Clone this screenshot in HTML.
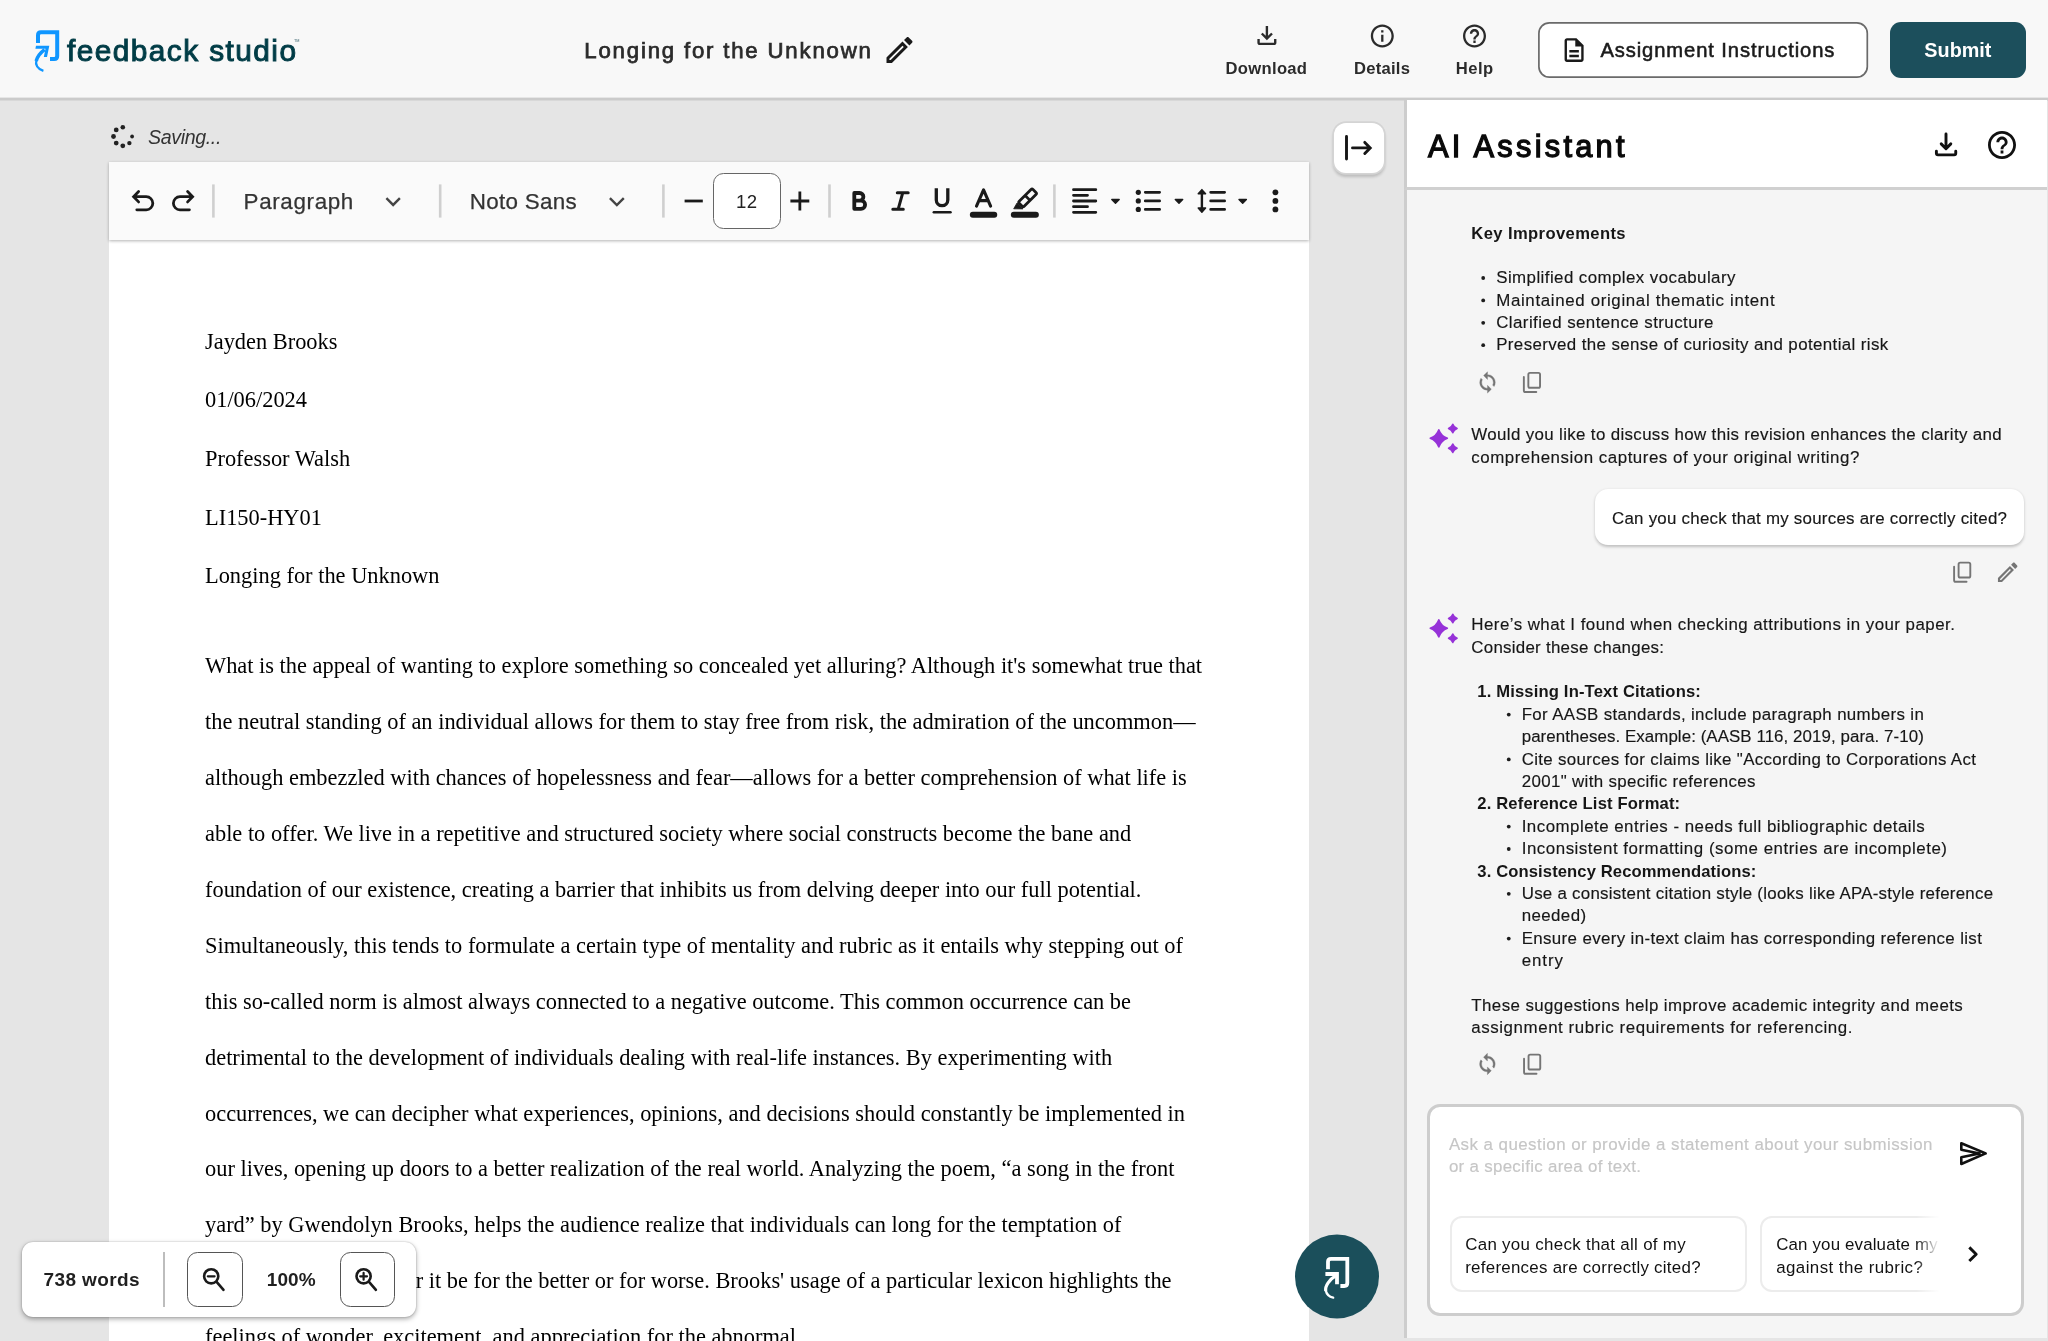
<!DOCTYPE html>
<html lang="en">
<head>
<meta charset="utf-8">
<title>Feedback Studio - Longing for the Unknown</title>
<style>
html,body{margin:0;padding:0}
body{width:2048px;height:1341px;overflow:hidden;position:relative;background:#e5e5e5;font-family:"Liberation Sans",sans-serif;color:#1c1c1c}
header,main,aside{display:block;position:absolute;left:0;top:0;width:2048px;height:1341px;will-change:transform}
header{height:101px}
div,article{box-sizing:border-box}
.t{position:absolute;white-space:nowrap;margin:0;padding:0;font-weight:400;display:block}
.ss{font-family:"Liberation Sans",sans-serif}
.sf{font-family:"Liberation Serif",serif}
svg{position:absolute;left:0;top:0;overflow:visible;pointer-events:none}
.hbar{position:absolute;left:0;top:0;width:2048px;height:98px;background:#f8f8f8}
.btn-assign{position:absolute;left:1538px;top:22px;width:330px;height:56px;background:#fff;border-radius:11px}
.btn-submit{position:absolute;left:1890px;top:22px;width:136px;height:56px;background:#1c4f5c;border-radius:11px}
.page{position:absolute;left:109px;top:200px;width:1200px;height:1141px;background:#fff}
.page .t{margin-left:-109px;margin-top:-200px}
.toolbar{position:absolute;left:109px;top:162px;width:1200px;height:78px;background:#fafafa;box-shadow:0 1px 3px rgba(0,0,0,.3)}
.sizebox{position:absolute;left:712.8px;top:173.3px;width:67.8px;height:55.5px;background:#fff;border:1.5px solid #666;border-radius:10.5px}
.ai-head{position:absolute;left:1404px;top:100px;width:643px;height:90px;background:#fff;border-left:3px solid #cdcdcd;border-bottom:3px solid #d0d0d0}
.ai-body{position:absolute;left:1404px;top:190px;width:643px;height:1148px;background:#f5f5f5;border-left:3px solid #cdcdcd}
.bubble{position:absolute;left:1595.4px;top:489.4px;width:428.3px;height:55.2px;background:#fff;border-radius:13px;box-shadow:0 1.5px 3px rgba(0,0,0,.22)}
.ask{position:absolute;left:1427px;top:1104px;width:597px;height:212px;background:#fff;border:3px solid #cdcdcd;border-radius:13px}
.chips{position:absolute;left:0;top:0;width:512px;height:206px;overflow:hidden}
.chip{position:absolute;top:109px;height:76px;width:297px;border:2px solid #ececec;border-radius:12px;background:#fff}
.chip.c1{left:20px}
.chip.c2{left:330px}
.chip .t{margin-top:-1218px}
.chip.c1 .t{margin-left:-1452px}
.chip.c2 .t{margin-left:-1762px}
.fade{position:absolute;left:486px;top:100px;width:26px;height:100px;background:linear-gradient(90deg,rgba(255,255,255,0),#fff 90%)}
.collapse{position:absolute;left:1334px;top:123px;width:50px;height:50px;background:#fff;border-radius:12px;box-shadow:0 0 0 1.8px #d4d4d4,0 3px 3px 1px rgba(0,0,0,.18)}
.status{position:absolute;left:21.9px;top:1241.8px;width:394.6px;height:75.5px;background:#fff;border-radius:11px;box-shadow:0 2px 5px rgba(0,0,0,.34),0 0 1.5px rgba(0,0,0,.3)}
.divider{position:absolute;left:141.6px;top:9.9px;width:1.6px;height:55.3px;background:#bdbdbd}
.zb{position:absolute;top:9.9px;width:55.4px;height:55.4px;background:#fff;border:1.5px solid #555;border-radius:10.5px}
.z1{left:165.5px}.z2{left:317.9px}
</style>
</head>
<body>
<main id="editor">
<article class="page">
<p class="t sf" style="left:205.00px;top:327px;height:29px;line-height:29px;font-size:22.4px;color:#000;">Jayden Brooks</p>
<p class="t sf" style="left:205.00px;top:385px;height:29px;line-height:29px;font-size:22.4px;color:#000;">01/06/2024</p>
<p class="t sf" style="left:205.00px;top:444px;height:29px;line-height:29px;font-size:22.4px;color:#000;">Professor Walsh</p>
<p class="t sf" style="left:205.00px;top:503px;height:29px;line-height:29px;font-size:22.4px;color:#000;">LI150-HY01</p>
<p class="t sf" style="left:205.00px;top:561px;height:29px;line-height:29px;font-size:22.4px;color:#000;">Longing for the Unknown</p>
<p class="t sf" style="left:205.00px;top:651px;height:29px;line-height:29px;font-size:22.4px;color:#000;">What is the appeal of wanting to explore something so concealed yet alluring? Although it's somewhat true that</p>
<p class="t sf" style="left:205.00px;top:707px;height:29px;line-height:29px;font-size:22.4px;color:#000;">the neutral standing of an individual allows for them to stay free from risk, the admiration of the uncommon&mdash;</p>
<p class="t sf" style="left:205.00px;top:763px;height:29px;line-height:29px;font-size:22.4px;color:#000;">although embezzled with chances of hopelessness and fear&mdash;allows for a better comprehension of what life is</p>
<p class="t sf" style="left:205.00px;top:819px;height:29px;line-height:29px;font-size:22.4px;color:#000;">able to offer. We live in a repetitive and structured society where social constructs become the bane and</p>
<p class="t sf" style="left:205.00px;top:875px;height:29px;line-height:29px;font-size:22.4px;color:#000;">foundation of our existence, creating a barrier that inhibits us from delving deeper into our full potential.</p>
<p class="t sf" style="left:205.00px;top:931px;height:29px;line-height:29px;font-size:22.4px;color:#000;">Simultaneously, this tends to formulate a certain type of mentality and rubric as it entails why stepping out of</p>
<p class="t sf" style="left:205.00px;top:987px;height:29px;line-height:29px;font-size:22.4px;color:#000;">this so-called norm is almost always connected to a negative outcome. This common occurrence can be</p>
<p class="t sf" style="left:205.00px;top:1043px;height:29px;line-height:29px;font-size:22.4px;color:#000;">detrimental to the development of individuals dealing with real-life instances. By experimenting with</p>
<p class="t sf" style="left:205.00px;top:1099px;height:29px;line-height:29px;font-size:22.4px;color:#000;">occurrences, we can decipher what experiences, opinions, and decisions should constantly be implemented in</p>
<p class="t sf" style="left:205.00px;top:1154px;height:29px;line-height:29px;font-size:22.4px;color:#000;">our lives, opening up doors to a better realization of the real world. Analyzing the poem, &ldquo;a song in the front</p>
<p class="t sf" style="left:205.00px;top:1210px;height:29px;line-height:29px;font-size:22.4px;color:#000;">yard&rdquo; by Gwendolyn Brooks, helps the audience realize that individuals can long for the temptation of</p>
<p class="t sf" style="left:205.00px;top:1266px;height:29px;line-height:29px;font-size:22.4px;color:#000;">the unexpected, whether it be for the better or for worse. Brooks' usage of a particular lexicon highlights the</p>
<p class="t sf" style="left:205.00px;top:1322px;height:29px;line-height:29px;font-size:22.4px;color:#000;">feelings of wonder, excitement, and appreciation for the abnormal.</p>
</article>
<div class="toolbar"></div>
<div class="sizebox"></div>
<svg width="2048" height="1341" viewBox="0 0 2048 1341" aria-hidden="true"><rect x="212.10" y="184.4" width="2.6" height="33.2" fill="#cfcfcf"/><rect x="438.90" y="184.4" width="2.6" height="33.2" fill="#cfcfcf"/><rect x="662.10" y="184.4" width="2.6" height="33.2" fill="#cfcfcf"/><rect x="828.20" y="184.4" width="2.6" height="33.2" fill="#cfcfcf"/><rect x="1053.10" y="184.4" width="2.6" height="33.2" fill="#cfcfcf"/><g fill="#222"><circle cx="122.80" cy="127.20" r="2.3"/><circle cx="132.10" cy="136.50" r="1.9"/><circle cx="129.38" cy="143.08" r="2.2"/><circle cx="122.80" cy="145.80" r="2.4"/><circle cx="116.22" cy="143.08" r="2.4"/><circle cx="113.50" cy="136.50" r="2.4"/><circle cx="116.22" cy="129.92" r="2.4"/></g>
<g fill="none" stroke="#1a1a1a" stroke-width="2.8" stroke-linejoin="miter" stroke-linecap="round">
<path d="M138.6,191.6 L133.6,196.7 L138.6,201.9 M134,196.7 H146.25 A6.55,6.55 0 0 1 146.25,209.8 H136.8"/>
<path transform="translate(326.2 0) scale(-1 1)" d="M138.6,191.6 L133.6,196.7 L138.6,201.9 M134,196.7 H146.25 A6.55,6.55 0 0 1 146.25,209.8 H136.8"/>
</g>
<g fill="none" stroke="#444" stroke-width="2.4">
<path d="M386.4,198.2 L393.15,204.95 L399.9,198.2"/>
<path d="M609.9,198.2 L616.85,205.15 L623.8,198.2"/>
</g>
<g fill="none" stroke="#1a1a1a" stroke-width="2.8">
<path d="M684.6,201 H702.8"/>
<path d="M790.4,201 H809.3 M799.85,191.4 V210.6"/>
</g>
<g fill="none" stroke="#1a1a1a" stroke-width="3.8" stroke-linejoin="round" stroke-linecap="round">
<path d="M854.3,193 V208.8 M854.3,193 H859.6 A3.8,3.8 0 0 1 859.6,200.6 H854.3 M854.3,200.6 H861 A4.1,4.1 0 0 1 861,208.8 H854.3"/>
</g>
<g fill="none" stroke="#1a1a1a" stroke-width="3" stroke-linecap="round">
<path d="M897.3,192.7 H908.2 M892.8,209.2 H903.3 M902.8,192.7 L898.2,209.2"/>
</g>
<g fill="none" stroke="#1a1a1a" stroke-width="3.3">
<path d="M936.3,188.3 V199.9 A5.75,5.75 0 0 0 947.8,199.9 V188.3"/>
<path stroke-width="2.5" stroke-linecap="round" d="M933.8,212.3 H950.5"/>
<path stroke-width="3.1" stroke-linecap="round" stroke-linejoin="round" d="M976.5,206.2 L983.55,189.8 L990.6,206.2 M979.2,200.6 H987.9"/>
<path stroke-width="5.9" stroke-linecap="round" d="M972.8,214.8 H994.3"/>
<path stroke-width="5.9" stroke-linecap="round" d="M1013.8,214.8 H1035.9"/>
</g>
<g transform="translate(1027.6 197.9) rotate(-45)" fill="none" stroke="#1a1a1a" stroke-width="2.8" stroke-linejoin="round">
<rect x="-9.75" y="-3.5" width="19.5" height="7" rx="1.4"/>
<path d="M0,-3.5 V3.5"/>
</g>
<path fill="#1a1a1a" stroke="#1a1a1a" stroke-width="0.8" stroke-linejoin="round" d="M1013.7,208.8 L1017,203 L1023,208.9 Z"/>
<g fill="none" stroke="#1a1a1a" stroke-width="2.8" stroke-linecap="round">
<path d="M1073.5,189.7 H1095.8 M1073.5,195.35 H1087.5 M1073.5,201 H1095.8 M1073.5,206.65 H1087.5 M1073.5,212.3 H1095.8"/>
<path d="M1145.3,192.3 H1159.6 M1145.3,200.9 H1159.6 M1145.3,209.4 H1159.6"/>
<path d="M1210.7,192.3 H1224.6 M1210.7,200.9 H1224.6 M1210.7,209.4 H1224.6"/>
<path stroke-width="2.4" stroke-linecap="butt" d="M1201.9,192 V210"/>
</g>
<g fill="#1a1a1a" stroke="#1a1a1a" stroke-width="1.4" stroke-linejoin="round">
<path d="M1111.80,199.5 H1119.20 L1115.50,203.3 Z"/><path d="M1175.30,199.5 H1182.70 L1179.00,203.3 Z"/><path d="M1239.00,199.5 H1246.40 L1242.70,203.3 Z"/>
<path d="M1201.9,189.6 L1205.6,193.8 H1198.2 Z M1201.9,212.2 L1205.6,208 H1198.2 Z"/>
</g>
<g fill="#1a1a1a">
<circle cx="1138.3" cy="192.3" r="2.6"/><circle cx="1138.3" cy="200.9" r="2.6"/><circle cx="1138.3" cy="209.4" r="2.6"/>
<circle cx="1275.4" cy="192.3" r="2.9"/><circle cx="1275.4" cy="200.9" r="2.9"/><circle cx="1275.4" cy="209.4" r="2.9"/>
</g>
</svg>
<div class="t ss" style="left:148.00px;top:124px;height:26px;line-height:26px;font-size:19.6px;letter-spacing:-0.365px;color:#333333;font-style:italic;">Saving...</div>
<div class="t ss" style="left:243.60px;top:187px;height:29px;line-height:29px;font-size:22.4px;letter-spacing:0.646px;color:#333333;-webkit-text-stroke:0.25px currentColor;">Paragraph</div>
<div class="t ss" style="left:469.80px;top:187px;height:29px;line-height:29px;font-size:22.4px;letter-spacing:0.303px;color:#333333;-webkit-text-stroke:0.25px currentColor;">Noto Sans</div>
<div class="t ss" style="left:736.08px;top:189px;height:25px;line-height:25px;font-size:18.6px;letter-spacing:0.359px;color:#222222;">12</div>
</main>
<header id="top">
<div class="hbar"></div>
<div class="btn-assign" role="button" aria-label="Assignment Instructions"></div>
<div class="btn-submit" role="button" aria-label="Submit"></div>
<svg width="2048" height="1341" viewBox="0 0 2048 1341" aria-hidden="true"><rect x="0" y="97.6" width="2048" height="2.9" fill="#cbcbcb"/><rect x="1538.9" y="22.9" width="328.4" height="54.3" rx="10.5" fill="none" stroke="#6a6a6a" stroke-width="1.7"/><g fill="none" stroke="#0f96ff"><path stroke-width="4" d="M38,43.1 V35.3 Q38,32.3 41,32.3 H57.2 V55.9 Q57.2,58.9 54.2,58.9 H50"/><path fill="#0f96ff" stroke="none" d="M36,45.7 H49.3 L47,57 H43.8 L45.5,48.7 H35.4 Z"/><path stroke-width="3.6" d="M44.6,49.6 C41,52.2 37.4,56.6 36.2,61"/><path stroke-width="2.3" stroke-linecap="butt" d="M36.4,60 C35.2,64.5 37.3,68.9 43.4,70.8"/></g><path transform="translate(882.17 32.67) scale(1.4440)" fill="#1a1a1a" d="M14.06 9.02l.92.92L5.92 19H5v-.92l9.06-9.06M17.66 3c-.25 0-.51.1-.7.29l-1.83 1.83 3.75 3.75 1.83-1.83c.39-.39.39-1.02 0-1.41l-2.34-2.34c-.2-.2-.45-.29-.71-.29zm-3.6 3.19L3 17.25V21h3.75L17.81 9.94l-3.75-3.75z"/><path transform="translate(1252.62 21.27) scale(1.1900)" fill="#2b2b2b" d="M18 15v3H6v-3H4v3c0 1.1.9 2 2 2h12c1.1 0 2-.9 2-2v-3h-2zm-1-4l-1.41-1.41L13 12.17V4h-2v8.17L8.41 9.59 7 11l5 5 5-5z"/><path transform="translate(1368.50 22.20) scale(1.1500)" fill="#2b2b2b" d="M11 7h2v2h-2zm0 4h2v6h-2zm1-9C6.48 2 2 6.48 2 12s4.48 10 10 10 10-4.48 10-10S17.52 2 12 2zm0 18c-4.41 0-8-3.59-8-8s3.59-8 8-8 8 3.59 8 8-3.59 8-8 8z"/><path transform="translate(1460.70 22.20) scale(1.1500)" fill="#2b2b2b" d="M11 18h2v-2h-2v2zm1-16C6.48 2 2 6.48 2 12s4.48 10 10 10 10-4.48 10-10S17.52 2 12 2zm0 18c-4.41 0-8-3.59-8-8s3.59-8 8-8 8 3.59 8 8-3.59 8-8 8zm0-14c-2.21 0-4 1.79-4 4h2c0-1.1.9-2 2-2s2 .9 2 2c0 2-3 1.75-3 5h2c0-2.25 3-2.5 3-5 0-2.21-1.79-4-4-4z"/><path transform="translate(1559.82 35.77) scale(1.1900)" fill="#1a1a1a" d="M8 16h8v2H8zm0-4h8v2H8zm6-10H6c-1.1 0-2 .9-2 2v16c0 1.1.89 2 1.99 2H18c1.1 0 2-.9 2-2V8l-6-6zm4 18H6V4h7v5h5v11z"/></svg>
<div class="t ss logo" style="left:67.00px;top:32px;height:37px;line-height:37px;font-size:29.8px;letter-spacing:1.448px;color:#003c46;-webkit-text-stroke:1.0px currentColor;">feedback studio</div>
<div class="t ss" style="left:294.00px;top:37px;height:8px;line-height:8px;font-size:3.8px;color:#35606a;">TM</div>
<h1 class="t ss" style="left:584.30px;top:36px;height:29px;line-height:29px;font-size:22.2px;letter-spacing:1.813px;color:#2b2b2b;-webkit-text-stroke:0.75px currentColor;">Longing for the Unknown</h1>
<div class="t ss" style="left:1225.57px;top:57px;height:23px;line-height:23px;font-size:16.6px;letter-spacing:0.310px;color:#2b2b2b;font-weight:700;">Download</div>
<div class="t ss" style="left:1354.06px;top:57px;height:23px;line-height:23px;font-size:16.6px;letter-spacing:0.242px;color:#2b2b2b;font-weight:700;">Details</div>
<div class="t ss" style="left:1455.83px;top:57px;height:23px;line-height:23px;font-size:16.6px;letter-spacing:0.458px;color:#2b2b2b;font-weight:700;">Help</div>
<div class="t ss" style="left:1600.40px;top:37px;height:26px;line-height:26px;font-size:20.2px;letter-spacing:0.898px;color:#1a1a1a;-webkit-text-stroke:0.55px currentColor;">Assignment Instructions</div>
<div class="t ss" style="left:1924.32px;top:37px;height:26px;line-height:26px;font-size:19.8px;letter-spacing:0.022px;color:#ffffff;font-weight:700;">Submit</div>
</header>
<aside id="ai">
<div class="ai-head"></div>
<div class="ai-body"></div>
<div class="bubble"></div>
<div class="ask">
<div class="chips"><div class="chip c1"><div class="t ss" style="left:1465.20px;top:1233px;height:23px;line-height:23px;font-size:16.9px;letter-spacing:0.308px;color:#111111;">Can you check that all of my</div>
<div class="t ss" style="left:1465.20px;top:1256px;height:23px;line-height:23px;font-size:16.9px;letter-spacing:0.272px;color:#111111;">references are correctly cited?</div></div><div class="chip c2"><div class="t ss" style="left:1776.20px;top:1233px;height:23px;line-height:23px;font-size:16.9px;letter-spacing:0.154px;color:#111111;">Can you evaluate my essay</div>
<div class="t ss" style="left:1776.20px;top:1256px;height:23px;line-height:23px;font-size:16.9px;letter-spacing:0.427px;color:#111111;">against the rubric?</div></div><div class="fade"></div></div>
</div>
<h2 class="t ss" style="left:1427.90px;top:127px;height:39px;line-height:39px;font-size:30.8px;letter-spacing:3.245px;color:#0a0a0a;-webkit-text-stroke:1.3px currentColor;">AI Assistant</h2>
<p class="t ss" style="left:1471.30px;top:222px;height:23px;line-height:23px;font-size:16.599999999999998px;letter-spacing:0.385px;color:#161616;font-weight:700;">Key Improvements</p>
<p class="t ss" style="left:1496.20px;top:266px;height:23px;line-height:23px;font-size:16.9px;letter-spacing:0.430px;color:#161616;-webkit-text-stroke:0.15px currentColor;">Simplified complex vocabulary</p>
<p class="t ss" style="left:1496.20px;top:289px;height:23px;line-height:23px;font-size:16.9px;letter-spacing:0.649px;color:#161616;-webkit-text-stroke:0.15px currentColor;">Maintained original thematic intent</p>
<p class="t ss" style="left:1496.20px;top:311px;height:23px;line-height:23px;font-size:16.9px;letter-spacing:0.431px;color:#161616;-webkit-text-stroke:0.15px currentColor;">Clarified sentence structure</p>
<p class="t ss" style="left:1496.20px;top:333px;height:23px;line-height:23px;font-size:16.9px;letter-spacing:0.386px;color:#161616;-webkit-text-stroke:0.15px currentColor;">Preserved the sense of curiosity and potential risk</p>
<p class="t ss" style="left:1471.30px;top:423px;height:23px;line-height:23px;font-size:16.9px;letter-spacing:0.354px;color:#161616;-webkit-text-stroke:0.15px currentColor;">Would you like to discuss how this revision enhances the clarity and</p>
<p class="t ss" style="left:1471.30px;top:446px;height:23px;line-height:23px;font-size:16.9px;letter-spacing:0.526px;color:#161616;-webkit-text-stroke:0.15px currentColor;">comprehension captures of your original writing?</p>
<p class="t ss" style="left:1612.00px;top:507px;height:23px;line-height:23px;font-size:16.9px;letter-spacing:0.244px;color:#161616;-webkit-text-stroke:0.15px currentColor;">Can you check that my sources are correctly cited?</p>
<p class="t ss" style="left:1471.30px;top:613px;height:23px;line-height:23px;font-size:16.9px;letter-spacing:0.459px;color:#161616;-webkit-text-stroke:0.15px currentColor;">Here&rsquo;s what I found when checking attributions in your paper.</p>
<p class="t ss" style="left:1471.30px;top:636px;height:23px;line-height:23px;font-size:16.9px;letter-spacing:0.265px;color:#161616;-webkit-text-stroke:0.15px currentColor;">Consider these changes:</p>
<div class="t ss" style="left:1477.18px;top:680px;height:23px;line-height:23px;font-size:16.599999999999998px;letter-spacing:0.375px;color:#161616;font-weight:700;">1.</div>
<p class="t ss" style="left:1496.20px;top:680px;height:23px;line-height:23px;font-size:16.599999999999998px;letter-spacing:0.161px;color:#161616;font-weight:700;">Missing In-Text Citations:</p>
<p class="t ss" style="left:1521.70px;top:703px;height:23px;line-height:23px;font-size:16.9px;letter-spacing:0.345px;color:#161616;-webkit-text-stroke:0.15px currentColor;">For AASB standards, include paragraph numbers in</p>
<p class="t ss" style="left:1521.70px;top:725px;height:23px;line-height:23px;font-size:16.9px;letter-spacing:0.069px;color:#161616;-webkit-text-stroke:0.15px currentColor;">parentheses. Example: (AASB 116, 2019, para. 7-10)</p>
<p class="t ss" style="left:1521.70px;top:748px;height:23px;line-height:23px;font-size:16.9px;letter-spacing:0.331px;color:#161616;-webkit-text-stroke:0.15px currentColor;">Cite sources for claims like &quot;According to Corporations Act</p>
<p class="t ss" style="left:1521.70px;top:770px;height:23px;line-height:23px;font-size:16.9px;letter-spacing:0.342px;color:#161616;-webkit-text-stroke:0.15px currentColor;">2001&quot; with specific references</p>
<div class="t ss" style="left:1477.18px;top:792px;height:23px;line-height:23px;font-size:16.599999999999998px;letter-spacing:0.375px;color:#161616;font-weight:700;">2.</div>
<p class="t ss" style="left:1496.20px;top:792px;height:23px;line-height:23px;font-size:16.599999999999998px;letter-spacing:0.153px;color:#161616;font-weight:700;">Reference List Format:</p>
<p class="t ss" style="left:1521.70px;top:815px;height:23px;line-height:23px;font-size:16.9px;letter-spacing:0.475px;color:#161616;-webkit-text-stroke:0.15px currentColor;">Incomplete entries - needs full bibliographic details</p>
<p class="t ss" style="left:1521.70px;top:837px;height:23px;line-height:23px;font-size:16.9px;letter-spacing:0.524px;color:#161616;-webkit-text-stroke:0.15px currentColor;">Inconsistent formatting (some entries are incomplete)</p>
<div class="t ss" style="left:1477.18px;top:860px;height:23px;line-height:23px;font-size:16.599999999999998px;letter-spacing:0.375px;color:#161616;font-weight:700;">3.</div>
<p class="t ss" style="left:1496.20px;top:860px;height:23px;line-height:23px;font-size:16.599999999999998px;letter-spacing:0.106px;color:#161616;font-weight:700;">Consistency Recommendations:</p>
<p class="t ss" style="left:1521.70px;top:882px;height:23px;line-height:23px;font-size:16.9px;letter-spacing:0.265px;color:#161616;-webkit-text-stroke:0.15px currentColor;">Use a consistent citation style (looks like APA-style reference</p>
<p class="t ss" style="left:1521.70px;top:904px;height:23px;line-height:23px;font-size:16.9px;letter-spacing:0.398px;color:#161616;-webkit-text-stroke:0.15px currentColor;">needed)</p>
<p class="t ss" style="left:1521.70px;top:927px;height:23px;line-height:23px;font-size:16.9px;letter-spacing:0.359px;color:#161616;-webkit-text-stroke:0.15px currentColor;">Ensure every in-text claim has corresponding reference list</p>
<p class="t ss" style="left:1521.70px;top:949px;height:23px;line-height:23px;font-size:16.9px;letter-spacing:0.949px;color:#161616;-webkit-text-stroke:0.15px currentColor;">entry</p>
<p class="t ss" style="left:1471.30px;top:994px;height:23px;line-height:23px;font-size:16.9px;letter-spacing:0.412px;color:#161616;-webkit-text-stroke:0.15px currentColor;">These suggestions help improve academic integrity and meets</p>
<p class="t ss" style="left:1471.30px;top:1016px;height:23px;line-height:23px;font-size:16.9px;letter-spacing:0.569px;color:#161616;-webkit-text-stroke:0.15px currentColor;">assignment rubric requirements for referencing.</p>
<p class="t ss" style="left:1448.90px;top:1133px;height:23px;line-height:23px;font-size:16.9px;letter-spacing:0.454px;color:#c6c6c6;-webkit-text-stroke:0.15px currentColor;">Ask a question or provide a statement about your submission</p>
<p class="t ss" style="left:1448.90px;top:1155px;height:23px;line-height:23px;font-size:16.9px;letter-spacing:0.305px;color:#c6c6c6;-webkit-text-stroke:0.15px currentColor;">or a specific area of text.</p>
<svg width="2048" height="1341" viewBox="0 0 2048 1341" aria-hidden="true">
<g fill="none" stroke="#111" stroke-width="2.9" stroke-linecap="round" stroke-linejoin="round">
<path d="M1946,133.9 V148.4 M1941.2,143.9 L1946,148.7 L1950.8,143.9 M1936.4,151.2 V153.3 Q1936.4,154.85 1938,154.85 H1954.2 Q1955.75,154.85 1955.75,153.3 V151.2"/>
</g><path transform="translate(1985.20 128.20) scale(1.4000)" fill="#111" d="M11 18h2v-2h-2v2zm1-16C6.48 2 2 6.48 2 12s4.48 10 10 10 10-4.48 10-10S17.52 2 12 2zm0 18c-4.41 0-8-3.59-8-8s3.59-8 8-8 8 3.59 8 8-3.59 8-8 8zm0-14c-2.21 0-4 1.79-4 4h2c0-1.1.9-2 2-2s2 .9 2 2c0 2-3 1.75-3 5h2c0-2.25 3-2.5 3-5 0-2.21-1.79-4-4-4z"/><g fill="#1c1c1c"><circle cx="1483.20" cy="278.00" r="1.9"/><circle cx="1483.20" cy="300.40" r="1.9"/><circle cx="1483.20" cy="322.80" r="1.9"/><circle cx="1483.20" cy="345.20" r="1.9"/><circle cx="1508.75" cy="714.60" r="1.9"/><circle cx="1508.75" cy="759.40" r="1.9"/><circle cx="1508.75" cy="826.60" r="1.9"/><circle cx="1508.75" cy="849.00" r="1.9"/><circle cx="1508.75" cy="893.80" r="1.9"/><circle cx="1508.75" cy="938.60" r="1.9"/></g><path fill="#9632d8" stroke="#9632d8" stroke-width="1.5" stroke-linejoin="round" d="M1438.80,429.70 Q1441.12,435.98 1447.40,438.30 Q1441.12,440.62 1438.80,446.90 Q1436.48,440.62 1430.20,438.30 Q1436.48,435.98 1438.80,429.70ZM1452.80,424.20 Q1453.96,427.34 1457.10,428.50 Q1453.96,429.66 1452.80,432.80 Q1451.64,429.66 1448.50,428.50 Q1451.64,427.34 1452.80,424.20ZM1452.80,443.90 Q1453.96,447.04 1457.10,448.20 Q1453.96,449.36 1452.80,452.50 Q1451.64,449.36 1448.50,448.20 Q1451.64,447.04 1452.80,443.90Z"/><path fill="#9632d8" stroke="#9632d8" stroke-width="1.5" stroke-linejoin="round" d="M1438.80,619.70 Q1441.12,625.98 1447.40,628.30 Q1441.12,630.62 1438.80,636.90 Q1436.48,630.62 1430.20,628.30 Q1436.48,625.98 1438.80,619.70ZM1452.80,614.20 Q1453.96,617.34 1457.10,618.50 Q1453.96,619.66 1452.80,622.80 Q1451.64,619.66 1448.50,618.50 Q1451.64,617.34 1452.80,614.20ZM1452.80,633.90 Q1453.96,637.04 1457.10,638.20 Q1453.96,639.36 1452.80,642.50 Q1451.64,639.36 1448.50,638.20 Q1451.64,637.04 1452.80,633.90Z"/><path transform="translate(1475.86 370.76) scale(0.9700)" fill="#757575" stroke="#757575" stroke-width="0.35" stroke-linejoin="round" d="M12 4V1L8 5l4 4V6c3.31 0 6 2.69 6 6 0 1.01-.25 1.97-.7 2.8l1.46 1.46C19.54 15.03 20 13.57 20 12c0-4.42-3.58-8-8-8zm0 14c-3.31 0-6-2.69-6-6 0-1.01.25-1.97.7-2.8L5.240 7.740C4.460 8.970 4 10.430 4 12c0 4.420 3.580 8 8 8v3l4-4-4-4v3z"/><path transform="translate(1475.76 1052.36) scale(0.9700)" fill="#757575" stroke="#757575" stroke-width="0.35" stroke-linejoin="round" d="M12 4V1L8 5l4 4V6c3.31 0 6 2.69 6 6 0 1.01-.25 1.97-.7 2.8l1.46 1.46C19.54 15.03 20 13.57 20 12c0-4.42-3.58-8-8-8zm0 14c-3.31 0-6-2.69-6-6 0-1.01.25-1.97.7-2.8L5.240 7.740C4.460 8.970 4 10.430 4 12c0 4.420 3.580 8 8 8v3l4-4-4-4v3z"/><g transform="translate(0.00 0.00)" fill="none" stroke="#757575" stroke-width="1.9" stroke-linecap="round" stroke-linejoin="round"><rect x="1528.35" y="372.85" width="11.7" height="14.9" rx="1.6"/><path d="M1523.85,376.9 V390.4 Q1523.85,392 1525.45,392 H1536.3"/></g><g transform="translate(0.20 681.80)" fill="none" stroke="#757575" stroke-width="1.9" stroke-linecap="round" stroke-linejoin="round"><rect x="1528.35" y="372.85" width="11.7" height="14.9" rx="1.6"/><path d="M1523.85,376.9 V390.4 Q1523.85,392 1525.45,392 H1536.3"/></g><g transform="translate(430.25 189.80)" fill="none" stroke="#757575" stroke-width="1.9" stroke-linecap="round" stroke-linejoin="round"><rect x="1528.35" y="372.85" width="11.7" height="14.9" rx="1.6"/><path d="M1523.85,376.9 V390.4 Q1523.85,392 1525.45,392 H1536.3"/></g><path transform="translate(1994.70 559.30) scale(1.0830)" fill="#757575" d="M14.06 9.02l.92.92L5.92 19H5v-.92l9.06-9.06M17.66 3c-.25 0-.51.1-.7.29l-1.83 1.83 3.75 3.75 1.83-1.83c.39-.39.39-1.02 0-1.41l-2.34-2.34c-.2-.2-.45-.29-.71-.29zm-3.6 3.19L3 17.25V21h3.75L17.81 9.94l-3.75-3.75z"/>
<path fill="none" stroke="#111" stroke-width="2.6" stroke-linejoin="round" d="M1961.3,1143.2 L1985.7,1153.4 L1961.3,1164 L1961.3,1157.3 L1979.5,1153.4 L1961.3,1149.7 Z"/>
<path fill="none" stroke="#111" stroke-width="2.9" stroke-linejoin="round" d="M1969.3,1247.4 L1976.2,1254.2 L1969.3,1261"/>
</svg>
</aside>
<div class="collapse"></div>
<div class="status"><div class="divider"></div><div class="zb z1"></div><div class="zb z2"></div></div>
<div class="t ss" style="left:43.60px;top:1267px;height:25px;line-height:25px;font-size:19.0px;letter-spacing:0.367px;color:#1f1f1f;font-weight:700;">738 words</div>
<div class="t ss" style="left:266.72px;top:1267px;height:25px;line-height:25px;font-size:19.0px;letter-spacing:0.115px;color:#1f1f1f;font-weight:700;">100%</div>
<svg width="2048" height="1341" viewBox="0 0 2048 1341" aria-hidden="true">
<g fill="none" stroke="#161616" stroke-width="2.9" stroke-linecap="round" stroke-linejoin="miter">
<path d="M1346.5,136.4 V159.1 M1352.5,147.9 H1369.6 M1364.8,142.4 L1370.2,147.9 L1364.8,153.4"/>
</g>
<g fill="none" stroke="#1a1a1a" stroke-width="2.6" stroke-linecap="round">
<circle cx="211.2" cy="1276.3" r="7.1"/><path d="M216.6,1281.9 L223.5,1289.8"/><path stroke-width="2.2" d="M207.8,1276.3 H214.6"/>
<circle cx="363.6" cy="1276.3" r="7.1"/><path d="M369,1281.9 L375.9,1289.8"/><path stroke-width="2.2" d="M360.2,1276.3 H367 M363.6,1272.9 V1279.7"/>
</g>
<circle cx="1337" cy="1276.5" r="42" fill="#1b4f5b"/>
<g transform="translate(0.00 0.00)" fill="none" stroke="#ffffff" stroke-width="3.8" stroke-linejoin="miter"><path d="M1328,1269.3 V1261.8 Q1328,1258.8 1331,1258.8 H1347.3 V1283 Q1347.3,1286 1344.3,1286 H1340.4"/><path d="M1325.4,1274 H1337 V1284.2"/><path stroke-width="3.2" stroke-linecap="butt" d="M1336.6,1275.2 C1329.5,1279.5 1324.6,1286 1325.8,1291"/><path stroke-width="2.3" stroke-linecap="round" d="M1325.6,1290 C1326.6,1294.6 1329.6,1297 1333.2,1297.7"/></g></svg>
</body>
</html>
